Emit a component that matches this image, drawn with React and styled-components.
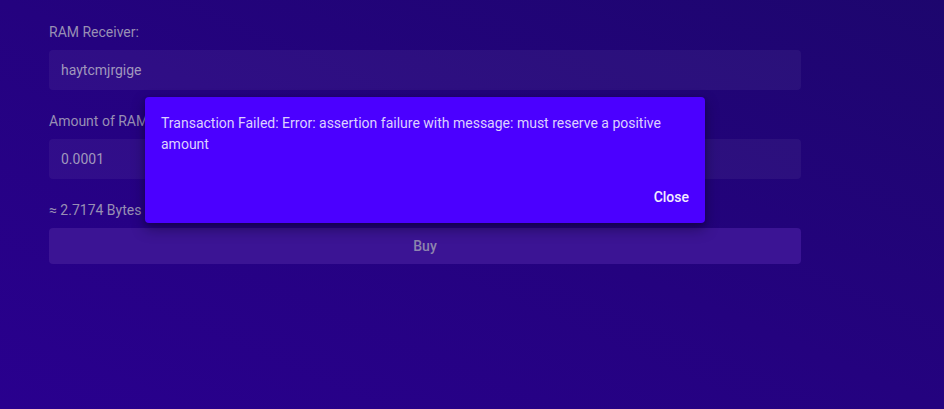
import React from 'react';
import styled, { createGlobalStyle } from 'styled-components';

const GlobalStyle = createGlobalStyle`
  html, body {
    margin: 0;
    padding: 0;
    height: 100%;
  }
  body {
    font-family: Roboto, 'Liberation Sans', sans-serif;
    background: linear-gradient(to top right, #29008e 0%, #24027f 50%, #1d066e 100%);
    min-height: 409px;
  }
`;

const BuyRam = () => {
  return (
    <Page>
      <GlobalStyle />
      <Form>
        <Field>
          <Label>RAM Receiver:</Label>
          <Input type="text" defaultValue="haytcmjrgige" />
        </Field>

        <Field>
          <Label>Amount of RAM (in EOS):</Label>
          <Input type="text" defaultValue="0.0001" />
        </Field>

        <Estimate>≈ 2.7174 Bytes</Estimate>
        <BuyButton>Buy</BuyButton>
      </Form>

      <Dialog>
        <DialogText>
          Transaction Failed: Error: assertion failure with message: must reserve a positive amount
        </DialogText>
        <DialogActions>
          <CloseButton>Close</CloseButton>
        </DialogActions>
      </Dialog>
    </Page>
  );
};

export default BuyRam;

const Page = styled.div`
  width: 944px;
  height: 409px;
  overflow: hidden;
  position: relative;
`;

const Form = styled.div`
  width: 752px;
  padding: 22px 0 0 49px;
  display: flex;
  flex-direction: column;
`;

const Field = styled.div`
  display: flex;
  flex-direction: column;
  margin-bottom: 21px;
`;

const Label = styled.label`
  font-size: 14px;
  line-height: 20px;
  color: #988fb4;
  margin-bottom: 8px;
`;

const Input = styled.input`
  height: 40px;
  box-sizing: border-box;
  padding: 0 12px;
  border: none;
  border-radius: 4px;
  background: rgba(255, 255, 255, 0.05);
  color: #a097bd;
  font-family: Roboto, 'Liberation Sans', sans-serif;
  font-size: 14px;

  &:focus {
    outline: none;
  }
`;

const Estimate = styled.div`
  font-size: 14px;
  line-height: 20px;
  color: #988fb4;
  margin-bottom: 8px;
`;

const BuyButton = styled.button`
  height: 36px;
  border: none;
  border-radius: 4px;
  background: #3b1494;
  color: #8e85ae;
  font-family: Roboto, 'Liberation Sans', sans-serif;
  font-size: 14px;
  font-weight: 500;
  cursor: pointer;
`;

const Dialog = styled.div`
  position: absolute;
  left: 145px;
  top: 97px;
  width: 560px;
  height: 126px;
  box-sizing: border-box;
  background: #4b00ff;
  border-radius: 4px;
  box-shadow: 0 6px 14px rgba(10, 0, 40, 0.45), 0 2px 4px rgba(10, 0, 40, 0.3);
  display: flex;
  flex-direction: column;
  justify-content: space-between;
`;

const DialogText = styled.div`
  padding: 16px 16px 0;
  font-size: 14px;
  line-height: 21px;
  color: #ddd0ff;
`;

const DialogActions = styled.div`
  display: flex;
  justify-content: flex-end;
  padding: 0 8px 8px;
`;

const CloseButton = styled.button`
  height: 36px;
  padding: 0 8px;
  border: none;
  background: transparent;
  color: #f3eeff;
  font-family: Roboto, 'Liberation Sans', sans-serif;
  font-size: 14px;
  font-weight: 500;
  cursor: pointer;
`;
